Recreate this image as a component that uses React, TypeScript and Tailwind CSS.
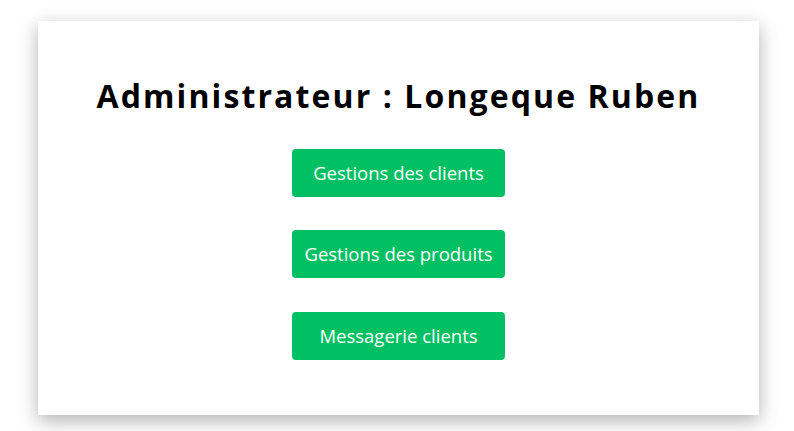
export default function App() {
  const links = ["Gestions des clients", "Gestions des produits", "Messagerie clients"];

  return (
    <main className="min-h-screen bg-white pt-[21px] pl-[38px]" style={{ fontFamily: "'Open Sans', 'Noto Sans', sans-serif" }}>
      <section className="w-[721px] h-[394px] bg-white shadow-[0_6px_18px_rgba(0,0,0,0.3)] flex flex-col items-center pt-[53px]">
        <h1 className="text-[32px] leading-[44px] font-bold tracking-[2.1px] text-black">
          Administrateur : Longeque Ruben
        </h1>

        <div className="flex flex-col items-center mt-[31px]">
          {links.map((label, i) => (
            <button
              key={label}
              className={`w-[213px] h-[48px] rounded-[4px] bg-[#01bf63] text-white text-[18.5px] ${
                i === 0 ? "" : i === 1 ? "mt-[33px]" : "mt-[34px]"
              }`}
            >
              {label}
            </button>
          ))}
        </div>
      </section>
    </main>
  );
}
